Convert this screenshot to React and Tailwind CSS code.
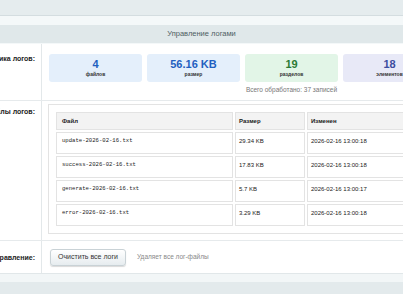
import React from 'react'

// log stats cards
const stats = [
  { value: '4', label: 'файлов', bg: 'bg-[#e4effb]', color: 'text-[#1f5fc0]' },
  { value: '56.16 KB', label: 'размер', bg: 'bg-[#e4effb]', color: 'text-[#1f5fc0]' },
  { value: '19', label: 'разделов', bg: 'bg-[#e2f5e7]', color: 'text-[#2b7a35]' },
  { value: '18', label: 'элементов', bg: 'bg-[#e8e9f7]', color: 'text-[#3d4da0]' },
  { value: '0', label: 'ошибок', bg: 'bg-[#fbe9e9]', color: 'text-[#c03030]' },
]

const files = [
  { name: 'update-2026-02-16.txt', size: '29.34 KB', date: '2026-02-16 13:00:18' },
  { name: 'success-2026-02-16.txt', size: '17.83 KB', date: '2026-02-16 13:00:18' },
  { name: 'generate-2026-02-16.txt', size: '5.7 KB', date: '2026-02-16 13:00:17' },
  { name: 'error-2026-02-16.txt', size: '3.29 KB', date: '2026-02-16 13:00:18' },
]

function Label({ children }) {
  return (
    <div className="w-[42px] shrink-0 flex justify-end pr-[6px] border-r border-[#e3e8ea]">
      <span className="whitespace-nowrap text-[7px] font-bold text-[#222]">{children}</span>
    </div>
  )
}

export default function App() {
  return (
    <div className="w-[403px] h-[294px] overflow-hidden bg-[#f4f8f9] font-['Liberation_Sans',Arial,sans-serif]">
      {/* top strip */}
      <div className="h-[16px] bg-[#e5ecee] border-b border-[#d4dde0]" />
      <div className="h-[9px]" />

      {/* title */}
      <div className="h-[18px] bg-[#e0e8ea] text-center text-[7.5px] leading-[18px] text-[#4e5d62]">
        Управление логами
      </div>
      <div className="h-[1px]" />

      <div className="bg-white">
        {/* stats */}
        <div className="flex border-b border-[#e6eaec]">
          <Label>
            <span className="block pt-[10px]">Статистика логов:</span>
          </Label>
          <div className="shrink-0 pl-[7px] pt-[10px] pb-[6px]">
            <div className="flex gap-[5px]">
              {stats.map((s) => (
                <div
                  key={s.label}
                  className={`w-[93px] h-[28px] shrink-0 rounded-[3px] ${s.bg} flex flex-col items-center pt-[4px]`}
                >
                  <span className={`text-[11px] leading-[12px] font-bold ${s.color}`}>{s.value}</span>
                  <span className="text-[5px] leading-[8px] font-bold text-[#333]">{s.label}</span>
                </div>
              ))}
            </div>
            <div className="mt-[4px] text-center text-[6.5px] leading-[8px] text-[#777]">
              Всего обработано: 37 записей
            </div>
          </div>
        </div>

        {/* files */}
        <div className="flex border-b border-[#e6eaec]">
          <Label>
            <span className="block pt-[6px]">Файлы логов:</span>
          </Label>
          <div className="shrink-0 pl-[6px] pt-[3px] pb-[6px]">
            <div className="border border-[#e3e3e3] p-[5px]">
              <table className="border-separate border-spacing-[2px] text-[6px] text-[#222]">
                <thead>
                  <tr className="h-[18px]">
                    <th className="w-[177px] text-left font-bold bg-[#f3f3f3] border border-[#e3e3e3] pl-[5px]">Файл</th>
                    <th className="w-[70px] text-left font-bold bg-[#f3f3f3] border border-[#e3e3e3] pl-[3px]">Размер</th>
                    <th className="w-[120px] text-left font-bold bg-[#f3f3f3] border border-[#e3e3e3] pl-[3px]">Изменен</th>
                  </tr>
                </thead>
                <tbody>
                  {files.map((f) => (
                    <tr key={f.name} className="h-[22px]">
                      <td className="align-top pt-[4px] pl-[5px] border border-[#e3e3e3] font-['Liberation_Mono',monospace] text-[5.6px]">
                        {f.name}
                      </td>
                      <td className="align-top pt-[4px] pl-[3px] border border-[#e3e3e3]">{f.size}</td>
                      <td className="align-top pt-[4px] pl-[3px] border border-[#e3e3e3] whitespace-nowrap">{f.date}</td>
                    </tr>
                  ))}
                </tbody>
              </table>
            </div>
          </div>
        </div>

        {/* actions */}
        <div className="flex h-[32px]">
          <Label>
            <span className="block pt-[12px]">Управление:</span>
          </Label>
          <div className="flex items-center pl-[8px] gap-[11px]">
            <button className="w-[76px] h-[17px] rounded-[3px] border border-[#c9d2d6] bg-gradient-to-b from-white to-[#e6ecef] shadow-[0_1px_1px_rgba(0,0,0,0.15)] text-[7px] text-[#333]">
              Очистить все логи
            </button>
            <span className="text-[6.5px] text-[#888]">Удаляет все лог-файлы</span>
          </div>
        </div>
      </div>

      {/* bottom */}
      <div className="border-t border-[#e1e7e9] h-[9px] bg-[#f2f6f7]" />
      <div className="h-[20px] bg-[#e3eaec]" />
    </div>
  )
}
